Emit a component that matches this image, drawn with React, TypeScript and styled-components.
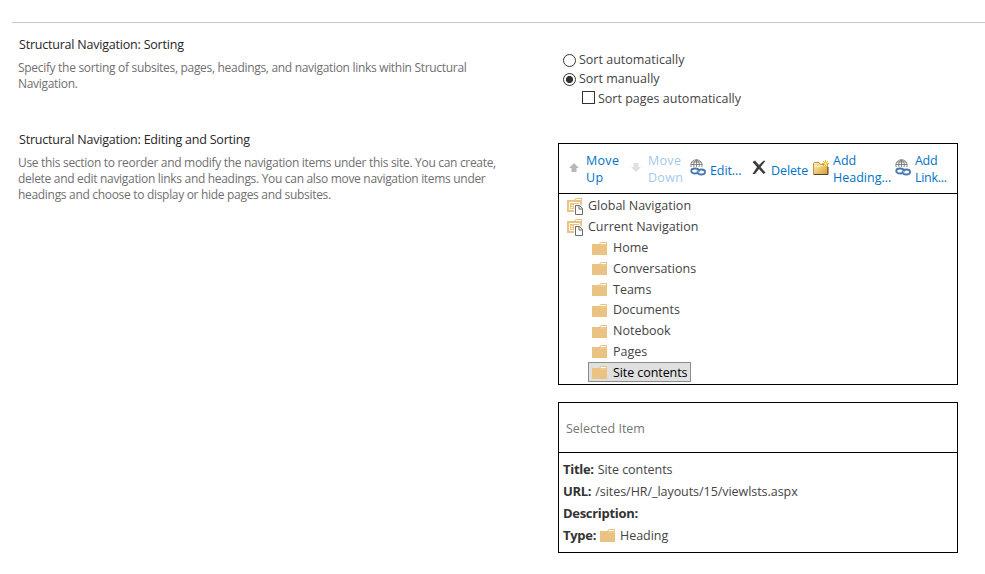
import React, {useState} from 'react';
import styled, {createGlobalStyle} from 'styled-components';

const GlobalStyle = createGlobalStyle`
  body {
    margin: 0;
    background: #fff;
    color: #444;
    font-family: "Open Sans", "Noto Sans", sans-serif;
    font-size: 12.5px;
  }
`;

const Page = styled.div`
  box-sizing: border-box;
  height: 574px;
  padding: 22px 0 0 12px;
  overflow: hidden;
`;

const Rule = styled.hr`
  height: 1px;
  margin: 0;
  border: 0;
  background: #c6c6c6;
`;

const Section = styled.section<{height: number}>`
  display: grid;
  grid-template-columns: 546px 400px;
  height: ${(props) => props.height}px;
`;

const Intro = styled.div`
  padding: 12px 0 0 6px;
`;

const SectionTitle = styled.h3`
  margin: 0 0 6px 1px;

  font-size: 12.5px;
  font-weight: 400;
  line-height: 19px;
  letter-spacing: -0.21px;
  color: #262626;
`;

const Description = styled.p`
  margin: 0;

  font-size: 12px;
  line-height: 16px;
  letter-spacing: -0.31px;
  white-space: nowrap;
  color: #707070;
`;

const Options = styled.div`
  display: flex;
  flex-direction: column;

  padding: 27px 0 0 5px;
`;

const Option = styled.label<{indent?: number}>`
  display: flex;
  align-items: center;
  gap: 3px;

  height: 19px;
  margin-left: ${(props) => props.indent || 0}px;
`;

const OptionText = styled.span<{lift?: number; drop?: number}>`
  padding-top: ${(props) => props.drop || 0}px;
  padding-bottom: ${(props) => props.lift || 0}px;
`;

const Radio = styled.input.attrs({type: 'radio'})`
  appearance: none;
  width: 13px;
  height: 13px;
  margin: 1px 0 0;

  border: 1px solid #333;
  border-radius: 50%;
  background: #fff;

  &:checked {
    background: radial-gradient(circle, #333 3.2px, #fff 3.9px);
  }
`;

const Checkbox = styled.input.attrs({type: 'checkbox'})`
  appearance: none;
  width: 13px;
  height: 13px;
  margin: 0;

  border: 1px solid #333;
  background: #fff;

  &:checked {
    box-shadow: inset 0 0 0 2px #fff;
    background: #333;
  }
`;

const Panels = styled.div`
  display: flex;
  flex-direction: column;
  gap: 17px;

  padding-top: 25px;
`;

const Panel = styled.div<{height: number}>`
  box-sizing: border-box;
  height: ${(props) => props.height}px;

  border: 1px solid #000;
`;

const Toolbar = styled.div`
  display: flex;
  align-items: center;

  height: 49px;
  padding-left: 10px;

  border-bottom: 1px solid #000;
`;

const Tool = styled.a<{width: number; gap: number; disabled?: boolean}>`
  display: flex;
  align-items: center;
  gap: ${(props) => props.gap}px;
  flex: none;

  width: ${(props) => props.width}px;

  line-height: 17px;
  color: #0072c6;
  opacity: ${(props) => props.disabled ? 0.38 : 1};

  cursor: pointer;

  & svg {
    flex: none;
    margin-bottom: 2px;
  }
`;

const ToolLabel = styled.span<{drop?: number; spacing?: number}>`
  padding-top: ${(props) => props.drop || 0}px;
  letter-spacing: ${(props) => props.spacing || 0}px;
  white-space: pre;
`;

const Tree = styled.div`
  display: flex;
  flex-direction: column;

  padding-top: 1.6px;
`;

const TreeRow = styled.div<{level: number; selected?: boolean}>`
  display: flex;
  align-items: center;
  align-self: flex-start;
  gap: 5px;

  box-sizing: border-box;
  height: 20.78px;
  margin-left: ${(props) => props.level ? 29 : 4}px;
  padding: 0 3px;

  border: 1px solid ${(props) => props.selected ? '#8c8c8c' : 'transparent'};
  background: ${(props) => props.selected ? '#e0e0e0' : 'transparent'};
  color: ${(props) => props.selected ? '#000' : '#444'};
  line-height: 17px;
  letter-spacing: ${(props) => props.selected ? -0.08 : 0}px;

  cursor: pointer;

  & svg {
    margin-top: 2px;
  }
`;

const PanelTitle = styled.div`
  height: 49px;
  padding-left: 7px;

  border-bottom: 1px solid #000;
  line-height: 52px;
  color: #777;
`;

const Details = styled.div`
  padding: 5px 0 0 4px;
`;

const DetailRow = styled.div`
  display: flex;
  align-items: center;
  gap: 4px;

  height: 22px;
  letter-spacing: -0.05px;

  & b {
    font-size: 13px;
    font-weight: 700;
    letter-spacing: -0.3px;
    color: #333;
  }

  & svg {
    margin-top: 2px;
  }
`;

const FolderIcon = () => (
    <svg width="16" height="14" viewBox="0 0 16 14">
        <path d="M0 2h7l2-2h6v13H0z" fill="#eac282"/>
        <path d="M9 1h5v1H8.500z" fill="#fff"/>
        <path d="M8 3h6" stroke="#f3dbb3" strokeWidth=".6"/>
    </svg>
);

const SiteIcon = () => (
    <svg width="16" height="17" viewBox="0 0 16 17">
        <path d="M0 2h7l2-2h6v14H0z" fill="#eac282"/>
        <path d="M9 1h5v1H8.500z" fill="#fff"/>
        <path d="M2.500 4.500h10v7h-10zM4 7.500h2M7 7.500h4M4 9.500h2M7 9.500h3" stroke="#fff" fill="none"/>
        <path d="M7 6h6l3 3v8H7z" fill="#fff"/>
        <path d="M8.500 7.500h4l3 3v6h-7z" fill="#fff" stroke="#6a6a6a"/>
        <path d="M12 7.500V11h3.500" fill="none" stroke="#6a6a6a"/>
    </svg>
);

const ArrowIcon = ({down}: {down?: boolean}) => (
    <svg width="10" height="9" viewBox="0 0 10 9">
        <path
            d="M5 0l5 5H7.500v4h-5V5H0z"
            fill={down ? '#b0b0b0' : '#b8b8b8'}
            transform={down ? 'rotate(180 5 4.5)' : undefined}
        />
    </svg>
);

const LinkIcon = () => (
    <svg width="16" height="17" viewBox="0 0 16 17">
        <g fill="none" stroke="#777" strokeWidth=".9">
            <path d="M1.200 8C0 4 2.500 .8 6.500 .8S13 4 11.800 8M.8 5.500h11.400M2 3h9M6.500 .8V8"/>
            <path d="M4 8C3 5 4 2.500 6.500 .8 9 2.500 10 5 9 8"/>
        </g>
        <path d="M1 9h14v7H1z" fill="#fff"/>
        <g fill="none" stroke="#4a78ae" strokeWidth="1.800">
            <ellipse cx="5" cy="12" rx="3.800" ry="2.500"/>
            <ellipse cx="11.300" cy="13" rx="3.800" ry="2.500"/>
        </g>
        <path d="M7.200 11.200l1.800 2.600" stroke="#fff" strokeWidth=".6"/>
    </svg>
);

const DeleteIcon = () => (
    <svg width="14" height="15" viewBox="0 0 14 15">
        <path d="M.5 2L3 .5l4 4.500L11.500 .8h2L8.500 7l5 5.500-2 1.500L7 9l-4 5H.5L5 7z" fill="#3c3c3c"/>
    </svg>
);

const NewFolderIcon = () => (
    <svg width="17" height="16" viewBox="0 0 17 16">
        <defs>
            <linearGradient id="newFolder" x1="0" y1="0" x2="1" y2="1">
                <stop offset="0" stopColor="#fff0ae"/>
                <stop offset="1" stopColor="#d99f35"/>
            </linearGradient>
        </defs>
        <path d="M.5 14.500v-11l1-1H6l1.500 2h7v10z" fill="url(#newFolder)" stroke="#b3914f"/>
        <path d="M1 6.500h5l1.500-1H14" fill="none" stroke="#fff6cf"/>
        <path d="M1 14.500h14V7" fill="none" stroke="#4c4330"/>
        <path d="M12.500 0v7M9 3.500h7M10 1l5 5M15 1l-5 5" stroke="#f0b51e"/>
        <path d="M11.500 2.500h2v2h-2z" fill="#fff7a8"/>
    </svg>
);

const navigationItems = [
    {title: 'Global Navigation', level: 0},
    {title: 'Current Navigation', level: 0},
    {title: 'Home', level: 1},
    {title: 'Conversations', level: 1},
    {title: 'Teams', level: 1},
    {title: 'Documents', level: 1},
    {title: 'Notebook', level: 1},
    {title: 'Pages', level: 1},
    {title: 'Site contents', level: 1},
];

const App: React.FC = () => {
    const [sorting, setSorting] = useState('manual');
    const [sortPages, setSortPages] = useState(false);
    const [selected, setSelected] = useState('Site contents');

    return (
        <Page>
            <GlobalStyle/>
            <Rule/>
            <Section height={95}>
                <Intro>
                    <SectionTitle>Structural Navigation: Sorting</SectionTitle>
                    <Description>
                        Specify the sorting of subsites, pages, headings, and navigation links within Structural<br/>
                        Navigation.
                    </Description>
                </Intro>
                <Options>
                    <Option>
                        <Radio name="sorting" checked={sorting === 'auto'} onChange={() => setSorting('auto')}/>
                        <OptionText lift={1}>Sort automatically</OptionText>
                    </Option>
                    <Option>
                        <Radio name="sorting" checked={sorting === 'manual'} onChange={() => setSorting('manual')}/>
                        <OptionText lift={1}>Sort manually</OptionText>
                    </Option>
                    <Option indent={19}>
                        <Checkbox checked={sortPages} onChange={() => setSortPages(!sortPages)}/>
                        <OptionText drop={2}>Sort pages automatically</OptionText>
                    </Option>
                </Options>
            </Section>
            <Section height={450}>
                <Intro>
                    <SectionTitle>Structural Navigation: Editing and Sorting</SectionTitle>
                    <Description>
                        Use this section to reorder and modify the navigation items under this site. You can create,<br/>
                        delete and edit navigation links and headings. You can also move navigation items under<br/>
                        headings and choose to display or hide pages and subsites.
                    </Description>
                </Intro>
                <Panels>
                    <Panel height={242}>
                        <Toolbar>
                            <Tool width={62} gap={7}><ArrowIcon/><ToolLabel spacing={0.3}>{'Move\nUp'}</ToolLabel></Tool>
                            <Tool width={59} gap={7} disabled><ArrowIcon down/><ToolLabel spacing={0.3}>{'Move\nDown'}</ToolLabel></Tool>
                            <Tool width={62} gap={4}><LinkIcon/><ToolLabel drop={3} spacing={-0.1}>Edit...</ToolLabel></Tool>
                            <Tool width={61} gap={5}><DeleteIcon/><ToolLabel drop={3} spacing={-0.1}>Delete</ToolLabel></Tool>
                            <Tool width={82} gap={3}><NewFolderIcon/><ToolLabel>{'Add\nHeading...'}</ToolLabel></Tool>
                            <Tool width={55} gap={4}><LinkIcon/><ToolLabel spacing={-0.3}>{'Add\nLink...'}</ToolLabel></Tool>
                        </Toolbar>
                        <Tree>
                            {navigationItems.map((item) => (
                                <TreeRow
                                    key={item.title}
                                    level={item.level}
                                    selected={item.title === selected}
                                    onClick={() => setSelected(item.title)}
                                >
                                    {item.level ? <FolderIcon/> : <SiteIcon/>}
                                    {item.title}
                                </TreeRow>
                            ))}
                        </Tree>
                    </Panel>
                    <Panel height={151}>
                        <PanelTitle>Selected Item</PanelTitle>
                        <Details>
                            <DetailRow><b>Title:</b>Site contents</DetailRow>
                            <DetailRow><b>URL:</b>/sites/HR/_layouts/15/viewlsts.aspx</DetailRow>
                            <DetailRow><b>Description:</b></DetailRow>
                            <DetailRow><b>Type:</b><FolderIcon/>Heading</DetailRow>
                        </Details>
                    </Panel>
                </Panels>
            </Section>
        </Page>
    );
};

export default App;
